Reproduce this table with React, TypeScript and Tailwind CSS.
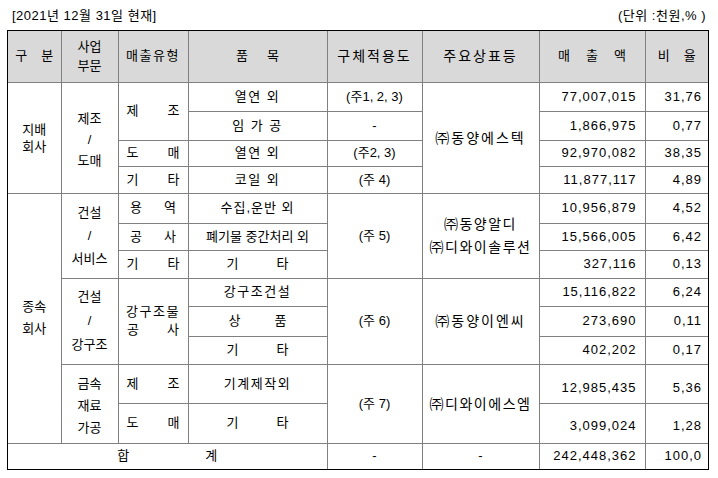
import React from "react";

// 매출 현황 표 (2021.12.31 기준)
const cell = "border border-[#808080] p-0 text-center align-middle";
const num = "border border-[#808080] p-0 pr-[8px] text-right align-middle tracking-[1px]";
const rate = "border border-[#808080] p-0 pr-[6px] text-right align-middle tracking-[1px]";

function Pair({ a, b, className }: { a: string; b: string; className: string }) {
  return (
    <span className={"inline-flex justify-center " + className}>
      <span>{a}</span>
      <span>{b}</span>
    </span>
  );
}

function Lines({ items, className }: { items: string[]; className: string }) {
  return (
    <div className={"flex flex-col items-center " + className}>
      {items.map((t, i) => (
        <span key={i}>{t}</span>
      ))}
    </div>
  );
}

export default function App() {
  return (
    <div className="w-[718px] h-[478px] bg-white text-black text-[13px] font-['Liberation_Sans','Noto_Sans_CJK_KR',sans-serif]">
      <div className="ml-[7px] w-[702px]">
        <div className="h-[30px] flex items-center justify-between pl-[5px] pr-[3px] pt-[1px]">
          <span className="tracking-[0.5px]">[2021년 12월 31일 현재]</span>
          <span className="tracking-[0.5px]">(단위 :천원,% )</span>
        </div>
        <div className="border border-black">
          <table className="w-[700px] table-fixed border-collapse border-hidden leading-[16px]">
            <colgroup>
              <col className="w-[53px]" />
              <col className="w-[57px]" />
              <col className="w-[70px]" />
              <col className="w-[139px]" />
              <col className="w-[95px]" />
              <col className="w-[117px]" />
              <col className="w-[106px]" />
              <col className="w-[63px]" />
            </colgroup>
            <tbody>
              <tr className="h-[51px] bg-[#d9d9d9]">
                <td className={cell}><Pair a="구" b="분" className="gap-[14px]" /></td>
                <td className={cell}><Lines items={["사업", "부문"]} className="leading-[19px]" /></td>
                <td className={cell + " tracking-[1.5px]"}>매출유형</td>
                <td className={cell}><Pair a="품" b="목" className="gap-[19px]" /></td>
                <td className={cell + " text-[14px] tracking-[2px]"}>구체적용도</td>
                <td className={cell + " text-[14px] tracking-[2px]"}>주요상표등</td>
                <td className={cell}>
                  <span className="inline-flex gap-[16px]"><span>매</span><span>출</span><span>액</span></span>
                </td>
                <td className={cell}><Pair a="비" b="율" className="gap-[14px]" /></td>
              </tr>

              <tr className="h-[29px]">
                <td rowSpan={4} className={cell}><Lines items={["지배", "회사"]} className="leading-[17px]" /></td>
                <td rowSpan={4} className={cell}><Lines items={["제조", "/", "도매"]} className="leading-[21px] pt-[4px]" /></td>
                <td rowSpan={2} className={cell}><Pair a="제" b="조" className="gap-[29px]" /></td>
                <td className={cell + " tracking-[1.5px]"}>열연 외</td>
                <td className={cell}>(주1, 2, 3)</td>
                <td rowSpan={4} className={cell + " text-[14px] tracking-[2px]"}>㈜동양에스텍</td>
                <td className={num}>77,007,015</td>
                <td className={rate}>31,76</td>
              </tr>
              <tr className="h-[29px]">
                <td className={cell + " tracking-[1.5px]"}>임 가 공</td>
                <td className={cell}>-</td>
                <td className={num}>1,866,975</td>
                <td className={rate}>0,77</td>
              </tr>
              <tr className="h-[26px]">
                <td className={cell}><Pair a="도" b="매" className="gap-[29px]" /></td>
                <td className={cell + " tracking-[1.5px]"}>열연 외</td>
                <td className={cell}>(주2, 3)</td>
                <td className={num}>92,970,082</td>
                <td className={rate}>38,35</td>
              </tr>
              <tr className="h-[27px]">
                <td className={cell}><Pair a="기" b="타" className="gap-[29px]" /></td>
                <td className={cell + " tracking-[1.5px]"}>코일 외</td>
                <td className={cell}>(주 4)</td>
                <td className={num}>11,877,117</td>
                <td className={rate}>4,89</td>
              </tr>

              <tr className="h-[30px]">
                <td rowSpan={8} className={cell}><Lines items={["종속", "회사"]} className="leading-[22px]" /></td>
                <td rowSpan={3} className={cell}><Lines items={["건설", "/", "서비스"]} className="leading-[23px]" /></td>
                <td className={cell}><Pair a="용" b="역" className="gap-[22px]" /></td>
                <td className={cell + " tracking-[1px]"}>수집,운반 외</td>
                <td rowSpan={3} className={cell}>(주 5)</td>
                <td rowSpan={3} className={cell + " text-[14px] tracking-[1.5px]"}>
                  <Lines items={["㈜동양알디", "㈜디와이솔루션"]} className="leading-[23px]" />
                </td>
                <td className={num}>10,956,879</td>
                <td className={rate}>4,52</td>
              </tr>
              <tr className="h-[27px]">
                <td className={cell}><Pair a="공" b="사" className="gap-[22px]" /></td>
                <td className={cell}>폐기물 중간처리 외</td>
                <td className={num}>15,566,005</td>
                <td className={rate}>6,42</td>
              </tr>
              <tr className="h-[28px]">
                <td className={cell}><Pair a="기" b="타" className="gap-[29px]" /></td>
                <td className={cell}><Pair a="기" b="타" className="gap-[38px]" /></td>
                <td className={num}>327,116</td>
                <td className={rate}>0,13</td>
              </tr>

              <tr className="h-[28px]">
                <td rowSpan={3} className={cell}><Lines items={["건설", "/", "강구조"]} className="leading-[24px]" /></td>
                <td rowSpan={3} className={cell}>
                  <div className="inline-flex flex-col leading-[18px]">
                    <span className="tracking-[1.5px]">강구조물</span>
                    <span className="flex justify-between px-[1px]"><span>공</span><span>사</span></span>
                  </div>
                </td>
                <td className={cell + " tracking-[1.5px]"}>강구조건설</td>
                <td rowSpan={3} className={cell}>(주 6)</td>
                <td rowSpan={3} className={cell + " text-[14px] tracking-[2px]"}>㈜동양이엔씨</td>
                <td className={num}>15,116,822</td>
                <td className={rate}>6,24</td>
              </tr>
              <tr className="h-[30px]">
                <td className={cell}><Pair a="상" b="품" className="gap-[34px]" /></td>
                <td className={num}>273,690</td>
                <td className={rate}>0,11</td>
              </tr>
              <tr className="h-[28px]">
                <td className={cell}><Pair a="기" b="타" className="gap-[38px]" /></td>
                <td className={num}>402,202</td>
                <td className={rate}>0,17</td>
              </tr>

              <tr className="h-[39px]">
                <td rowSpan={2} className={cell}><Lines items={["금속", "재료", "가공"]} className="leading-[22px] pt-[4px]" /></td>
                <td className={cell}><Pair a="제" b="조" className="gap-[29px]" /></td>
                <td className={cell + " tracking-[1.5px]"}>기계제작외</td>
                <td rowSpan={2} className={cell}>(주 7)</td>
                <td rowSpan={2} className={cell + " text-[14px] tracking-[1.5px]"}>㈜디와이에스엠</td>
                <td className={num + " pt-[8px]"}>12,985,435</td>
                <td className={rate + " pt-[8px]"}>5,36</td>
              </tr>
              <tr className="h-[40px]">
                <td className={cell}><Pair a="도" b="매" className="gap-[29px]" /></td>
                <td className={cell}><Pair a="기" b="타" className="gap-[38px]" /></td>
                <td className={num + " pt-[6px]"}>3,099,024</td>
                <td className={rate + " pt-[6px]"}>1,28</td>
              </tr>

              <tr className="h-[26px]">
                <td colSpan={4} className={cell}><Pair a="합" b="계" className="gap-[76px]" /></td>
                <td className={cell}>-</td>
                <td className={cell}>-</td>
                <td className={num}>242,448,362</td>
                <td className={rate}>100,0</td>
              </tr>
            </tbody>
          </table>
        </div>
      </div>
    </div>
  );
}
